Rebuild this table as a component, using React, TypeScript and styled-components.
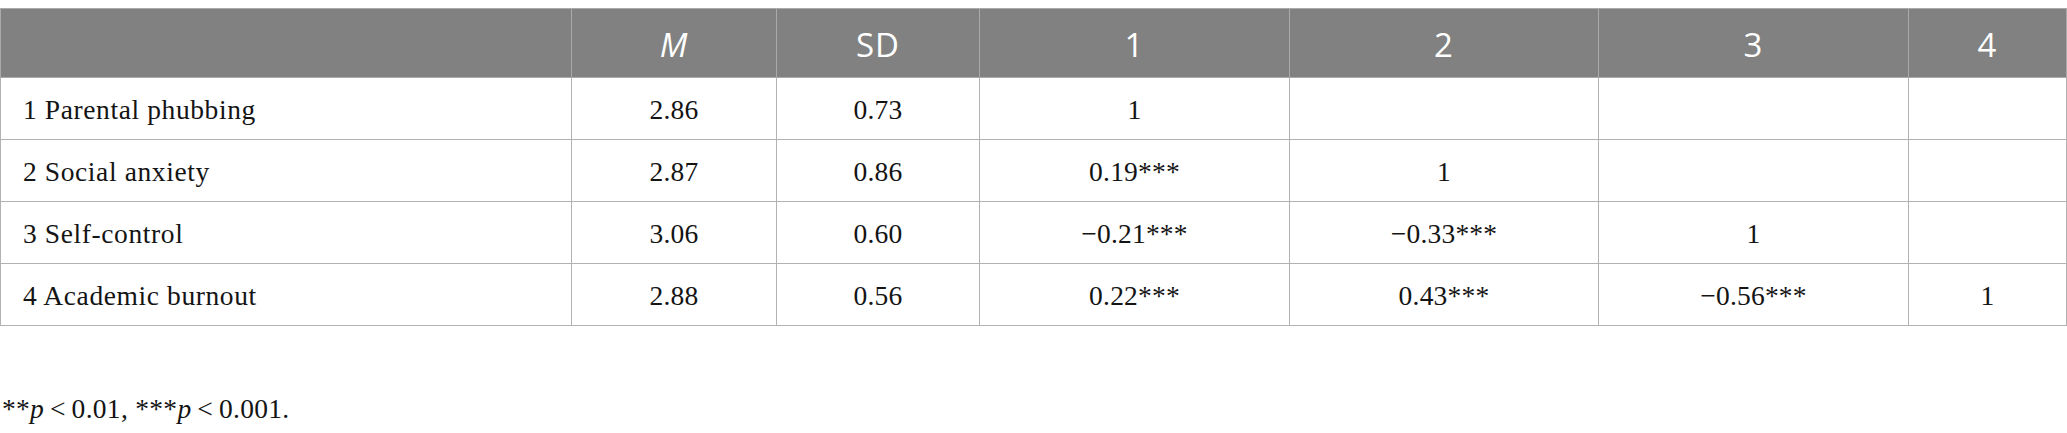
import React from "react";
import styled, { createGlobalStyle } from "styled-components";

const GlobalStyle = createGlobalStyle`
  html, body {
    margin: 0;
    padding: 0;
    background: #ffffff;
  }
  body {
    font-family: "Liberation Serif", "Times New Roman", serif;
  }
`;

const Page = styled.div`
  padding-top: 8px;
  width: 2067px;
`;

const Table = styled.table`
  border-collapse: collapse;
  table-layout: fixed;
  width: 2066px;
`;

const HeadCell = styled.th<{ $italic?: boolean }>`
  box-sizing: border-box;
  height: 69px;
  padding: 3px 0 0 0;
  background: #808180;
  color: #ffffff;
  font-family: "Open Sans", "Liberation Sans", sans-serif;
  font-weight: 400;
  font-size: 33px;
  line-height: 1;
  font-style: ${(p) => (p.$italic ? "italic" : "normal")};
  letter-spacing: 1px;
  text-align: center;
  vertical-align: middle;
  border: 1px solid #a9aaa9;
`;

const Cell = styled.td<{ $label?: boolean }>`
  box-sizing: border-box;
  height: 62px;
  padding: 3px 0 0 ${(p) => (p.$label ? "22px" : "0")};
  color: #141414;
  font-family: "Liberation Serif", "Times New Roman", serif;
  font-size: 27.5px;
  line-height: 1;
  letter-spacing: ${(p) => (p.$label ? "0.6px" : "0.2px")};
  text-align: ${(p) => (p.$label ? "left" : "center")};
  vertical-align: middle;
  border: 1px solid #b2b2b2;
`;

const Note = styled.p`
  margin: 66px 0 0 2px;
  font-family: "Liberation Serif", "Times New Roman", serif;
  font-size: 27.5px;
  line-height: 1.2;
  color: #141414;
  letter-spacing: 0.3px;
`;

const Ital = styled.i`
  font-style: italic;
`;

const widths = [571, 205, 203, 310, 309, 310, 158];

const rows: string[][] = [
  ["1 Parental phubbing", "2.86", "0.73", "1", "", "", ""],
  ["2 Social anxiety", "2.87", "0.86", "0.19***", "1", "", ""],
  ["3 Self-control", "3.06", "0.60", "\u22120.21***", "\u22120.33***", "1", ""],
  ["4 Academic burnout", "2.88", "0.56", "0.22***", "0.43***", "\u22120.56***", "1"],
];

export default function App() {
  return (
    <Page>
      <GlobalStyle />
      <Table>
        <colgroup>
          {widths.map((w, i) => (
            <col key={i} style={{ width: w }} />
          ))}
        </colgroup>
        <thead>
          <tr>
            <HeadCell />
            <HeadCell $italic>M</HeadCell>
            <HeadCell>SD</HeadCell>
            <HeadCell>1</HeadCell>
            <HeadCell>2</HeadCell>
            <HeadCell>3</HeadCell>
            <HeadCell>4</HeadCell>
          </tr>
        </thead>
        <tbody>
          {rows.map((r, ri) => (
            <tr key={ri}>
              {r.map((c, ci) => (
                <Cell key={ci} $label={ci === 0}>
                  {c}
                </Cell>
              ))}
            </tr>
          ))}
        </tbody>
      </Table>
      <Note>
        **<Ital>p</Ital>{"\u2009<\u2009"}0.01, ***<Ital>p</Ital>{"\u2009<\u2009"}0.001.
      </Note>
    </Page>
  );
}
